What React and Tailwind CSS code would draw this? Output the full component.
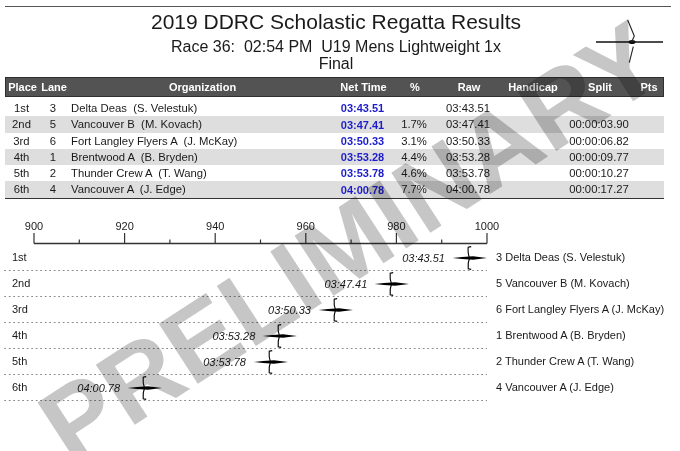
import React from "react";

const results = [
  { place: "1st", lane: 3, org: "Delta Deas", name: "S. Velestuk", net: "03:43.51", secs: 223.51, pct: "", raw: "03:43.51", split: "" },
  { place: "2nd", lane: 5, org: "Vancouver B", name: "M. Kovach", net: "03:47.41", secs: 227.41, pct: "1.7%", raw: "03:47.41", split: "00:00:03.90" },
  { place: "3rd", lane: 6, org: "Fort Langley Flyers A", name: "J. McKay", net: "03:50.33", secs: 230.33, pct: "3.1%", raw: "03:50.33", split: "00:00:06.82" },
  { place: "4th", lane: 1, org: "Brentwood A", name: "B. Bryden", net: "03:53.28", secs: 233.28, pct: "4.4%", raw: "03:53.28", split: "00:00:09.77" },
  { place: "5th", lane: 2, org: "Thunder Crew A", name: "T. Wang", net: "03:53.78", secs: 233.78, pct: "4.6%", raw: "03:53.78", split: "00:00:10.27" },
  { place: "6th", lane: 4, org: "Vancouver A", name: "J. Edge", net: "04:00.78", secs: 240.78, pct: "7.7%", raw: "04:00.78", split: "00:00:17.27" },
];

// axis: 900 at x=34, 1000 at x=487
const AXIS_X0 = 34;
const PX_PER_M = 4.53;
const cols = "grid grid-cols-[33px_30px_267px_55px_48px_60px_68px_66px_32px]";

const Logo = () => (
  <svg width="72" height="48" viewBox="0 0 72 48">
    <line x1="2" y1="24" x2="69" y2="24" stroke="#111" strokeWidth="1.6" />
    <ellipse cx="38" cy="24" rx="3.5" ry="2" fill="#111" />
    <path d="M33.7 2 L40.3 18 L37.7 23.7" stroke="#222" strokeWidth="1.1" fill="none" />
    <path d="M39.3 28.7 L35.3 44.7" stroke="#222" strokeWidth="1.1" fill="none" />
  </svg>
);

const Boat = () => (
  <svg width="35" height="24" viewBox="0 0 35 24" className="block">
    <polygon points="0.5,12 10,11 21,10.2 35,12 21,13.8 10,13" fill="#000" />
    <path d="M17.5 12 Q15.6 7 16.2 1.2 L19.2 0.6" stroke="#000" strokeWidth="1.1" fill="none" />
    <path d="M17.5 12 Q15.6 17 16.2 22.8 L19.2 23.4" stroke="#000" strokeWidth="1.1" fill="none" />
  </svg>
);

const Axis = () => {
  const ticks = [];
  for (let i = 0; i <= 10; i++) {
    const x = AXIS_X0 + i * 45.3;
    const major = i % 2 === 0;
    ticks.push(
      <line key={"t" + i} x1={x} y1={major ? 21 : 27.5} x2={x} y2={31.5} stroke="#333" strokeWidth="1.2" />
    );
    if (major) {
      ticks.push(
        <text key={"l" + i} x={x} y="18" textAnchor="middle" fontSize="11" fill="#222" fontFamily="'Liberation Sans', Arial, sans-serif">
          {900 + i * 10}
        </text>
      );
    }
  }
  return (
    <svg width="680" height="33" className="block">
      <line x1={AXIS_X0} y1="31.5" x2={AXIS_X0 + 453} y2="31.5" stroke="#333" strokeWidth="1.3" />
      {ticks}
    </svg>
  );
};

export default function App() {
  const best = results[0].secs;
  return (
    <div className="relative w-[680px] h-[451px] overflow-hidden bg-white text-[#1a1a1a] font-['Liberation_Sans',Arial,sans-serif]">
      <div className="pt-[6px]">
        <div className="ml-[5px] w-[666px] h-px bg-[#555]" />
      </div>

      {/* heading */}
      <div className="w-[672px] grid grid-cols-[1fr_auto_1fr] pt-[5px]">
        <div />
        <div className="flex flex-col items-center">
          <div className="text-[21px] leading-[20px] whitespace-pre">2019 DDRC Scholastic Regatta Results</div>
          <div className="mt-[6px] text-[16px] leading-[17px] whitespace-pre">Race 36:  02:54 PM  U19 Mens Lightweight 1x</div>
          <div className="text-[16px] leading-[17px]">Final</div>
        </div>
        <div className="justify-self-end mr-[6px] mt-[6px]">
          <Logo />
        </div>
      </div>

      {/* results table */}
      <div className="ml-[5px] w-[659px] mt-[5px]">
        <div className={cols + " h-[20px] items-center bg-[#535353] border border-[#2f2f2f] text-white font-bold text-[11px] text-center"}>
          <div>Place</div>
          <div>Lane</div>
          <div>Organization</div>
          <div>Net Time</div>
          <div>%</div>
          <div>Raw</div>
          <div>Handicap</div>
          <div>Split</div>
          <div>Pts</div>
        </div>
        <div className="pt-[3px] border-b border-[#333]">
          {results.map((r, i) => (
            <div
              key={r.place}
              className={cols + " h-[16.3px] items-center text-[11.3px] text-center whitespace-pre " + (i % 2 === 1 ? "bg-[#dedede]" : "")}
            >
              <div>{r.place}</div>
              <div>{r.lane}</div>
              <div className="text-left pl-[3px]">{r.org + "  (" + r.name + ")"}</div>
              <div className="font-bold text-[#1c1ccc] text-[11px]">{r.net}</div>
              <div>{r.pct}</div>
              <div>{r.raw}</div>
              <div />
              <div>{r.split}</div>
              <div />
            </div>
          ))}
        </div>
      </div>

      {/* progress chart */}
      <div className="mt-[13px]">
        <Axis />
        {results.map((r) => {
          const dist = (1000 * best) / r.secs;
          const bowX = AXIS_X0 + (dist - 900) * PX_PER_M;
          return (
            <div key={r.place} className="flex h-[26px]">
              <div className="relative ml-[3px] w-[484px] h-[26px] bg-[linear-gradient(to_right,#8a8a8a_1.5px,transparent_1.5px)] bg-size-[4.5px_1px] bg-repeat-x bg-bottom">
                <div className="pl-[9px] h-[25px] flex items-center text-[11px]">{r.place}</div>
                <div
                  className="absolute top-[1px] flex items-center gap-[7px]"
                  style={{ right: 487 - bowX }}
                >
                  <span className="italic text-[11px]">{r.net}</span>
                  <Boat />
                </div>
              </div>
              <div className="pl-[9px] h-[25px] flex items-center text-[11px] whitespace-nowrap">
                {r.lane} {r.org} ({r.name})
              </div>
            </div>
          );
        })}
      </div>

      {/* watermark */}
      <div className="pointer-events-none absolute left-[350px] top-[242px] -translate-x-1/2 -translate-y-1/2 -rotate-[33deg] whitespace-nowrap text-[104px] leading-none font-bold text-[#c6c6c6] mix-blend-multiply">
        PRELIMINARY
      </div>
    </div>
  );
}
